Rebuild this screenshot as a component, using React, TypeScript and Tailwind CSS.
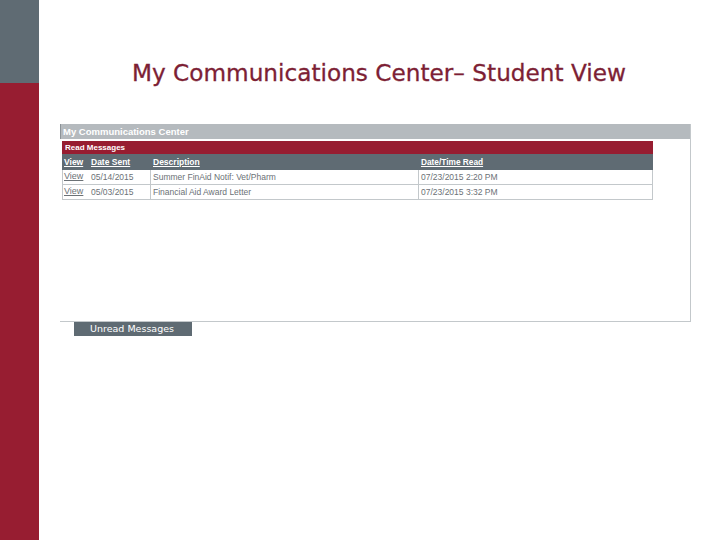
export default function App() {
  const rows = [
    ["05/14/2015", "Summer FinAid Notif: Vet/Pharm", "07/23/2015 2:20 PM"],
    ["05/03/2015", "Financial Aid Award Letter", "07/23/2015 3:32 PM"],
  ];
  return (
    <div className="flex h-[540px] w-[720px] overflow-hidden bg-white font-['Liberation_Sans',sans-serif]">
      <div className="flex w-[39px] shrink-0 flex-col">
        <div className="h-[83px] bg-[#5f6b73]" />
        <div className="flex-1 bg-[#971d31]" />
      </div>
      <div className="flex min-w-0 flex-1 flex-col">
        <div className="mt-[55px] ml-[93px] h-[35px] whitespace-pre font-['DejaVu_Sans',sans-serif] text-[23.2px] leading-[35px] text-[#7d1f35] [-webkit-text-stroke:0.3px_#7d1f35]">
          My Communications Center– Student View
        </div>
        <div className="mt-[34px] ml-[21px] flex h-[198px] w-[631px] flex-col border-r border-b border-[#c3c8cb]">
          <div className="h-[15px] border-l border-[#8c9398] bg-[#b5babe] pl-[2px] text-[9.5px] leading-[15px] font-bold text-white">
            My Communications Center
          </div>
          <div className="mt-[2px] ml-[2px] w-[591px] text-[8.5px]">
            <div className="h-[13px] bg-[#971d31] pl-[3px] text-[8px] leading-[13px] font-bold text-white">Read Messages</div>
            <div className="grid h-[16px] grid-cols-[25px_61px_268px_1fr] items-center bg-[#5f6b73] pl-[2px] font-bold text-white underline">
              <span>View</span>
              <span className="pl-[2px]">Date Sent</span>
              <span className="pl-[3px]">Description</span>
              <span className="pl-[3px] text-[8.3px]">Date/Time Read</span>
            </div>
            {rows.map((r) => (
              <div key={r[0]} className="grid h-[15px] grid-cols-[25px_61px_268px_1fr] items-center border-x border-b border-[#c3c8cb] pl-[1px] text-[#6b7176]">
                <span className="text-[9px] underline">View</span>
                <span className="pl-[2px]">{r[0]}</span>
                <span className="flex h-full items-center border-l border-[#c3c8cb] pl-[2px]">{r[1]}</span>
                <span className="flex h-full items-center whitespace-pre border-l border-[#c3c8cb] pl-[2px]">{r[2]}</span>
              </div>
            ))}
          </div>
        </div>
        <div className="ml-[35px] h-[14px] w-[118px] bg-[#5f6b73] pl-[16px] font-['DejaVu_Sans',sans-serif] text-[9.5px] leading-[14px] text-white">
          Unread Messages
        </div>
      </div>
    </div>
  );
}
